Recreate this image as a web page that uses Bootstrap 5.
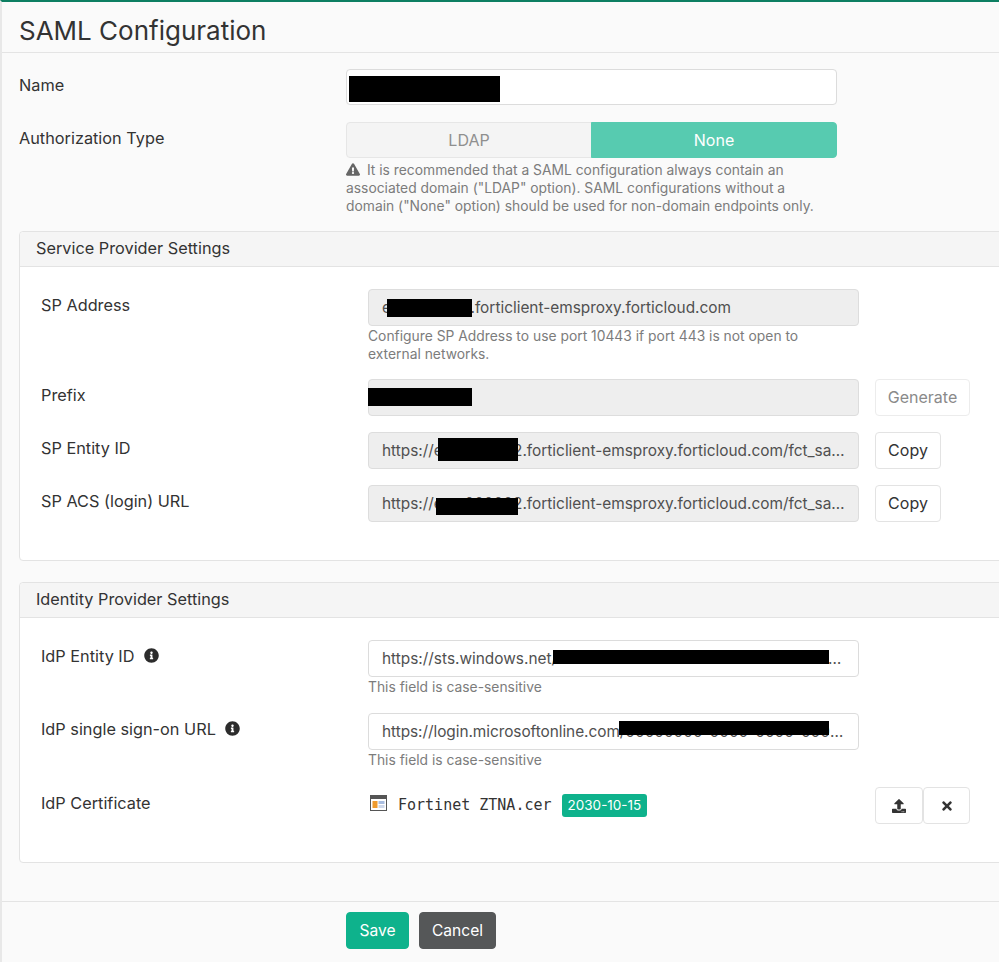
<!DOCTYPE html>
<html lang="en">
<head>
<meta charset="utf-8">
<title>SAML Configuration</title>
<link href="https://cdn.jsdelivr.net/npm/bootstrap@5.3.0/dist/css/bootstrap.min.css" rel="stylesheet">
<style>
html,body{height:962px;overflow:hidden;background:#fafafa}
body{font-family:Inter,"Liberation Sans",sans-serif;color:#333;font-size:16.3px}
.shell{height:962px;border-top:2px solid #0d7f62;border-left:2px solid #e8e8e8;background:#fafafa;overflow:hidden;display:flex;flex-direction:column}
.page-head{height:51px;border-bottom:1px solid #e4e4e4;padding-left:17px;display:flex;align-items:center}
.page-head h1{font-size:26px;font-weight:400;margin:0;color:#333;line-height:1;padding-top:8px}
.form-area{padding:16px 0 0 17px;flex:1 1 auto}
.fld{display:flex}
.fld-lbl{width:327px;flex:none;line-height:18px;padding-top:7px;color:#333}
.fld-main{width:491px;flex:none;position:relative}
.fld-side{margin-left:16px}
.ctl.form-control{height:37px;border:1px solid #dcdcdc;border-radius:4px;padding:0 13px 1px;font-size:15.4px;color:#505050;text-overflow:ellipsis;box-shadow:none}
.ctl.form-control[readonly]{background:#eee;border-color:#ddd}
.ctl-top{height:36px!important}
.ctl-tight.form-control{letter-spacing:-.05px}
.gap-a{margin-top:17px}
.seg .btn{height:36px;font-size:16px;border-radius:4px;padding:0;line-height:34px;flex:1 1 50%}
.seg-off{background:#f4f4f4;border:1px solid #e6e6e6;color:#8f8f8f}
.seg-on,.seg-on:hover{background:#57cbb0;border:1px solid #57cbb0;color:#fff}
.tip{font-size:13.85px;line-height:18px;color:#7c7c7c;margin:1px 0 0;width:470px}
.tip-top{margin-top:3px;width:480px}
.tip svg{width:14px;height:13px;fill:#666;vertical-align:-1px;margin-right:3px}
.pane{margin-right:-10px;border:1px solid #e3e3e3;border-radius:4px 0 0 4px;background:#fff}
.pane-one{margin-top:16px;height:330px}
.pane-two{margin-top:21px;height:281px}
.pane .card-header{height:35px;padding:0 16px;background:#f5f5f5;border-bottom:1px solid #e3e3e3;line-height:33px;color:#333;border-radius:4px 0 0 0}
.pane .card-body{padding:22px 0 0 21px}
.row-gap{margin-top:16px}
.row-gap-m{margin-top:17px}
.row-gap-l{margin-top:18px}
.ghost.btn{height:37px;padding:0;border:1px solid #e3e3e3;border-radius:4px;background:#fff;color:#333;font-size:16px;line-height:35px;white-space:nowrap;text-align:center}
.ghost-off.btn{color:#8a8a8a;border-color:#ececec;width:95px}
.ghost-copy.btn{width:66px}
.ghost-ico.btn{width:47px;padding:0;display:flex;align-items:center;justify-content:center}
.ghost-ico svg{height:14px;width:14px;fill:#333}
.ico-pair{margin-left:16px}
.ico-pair .ghost-ico.btn:first-child{width:48px}
.info{width:15px;height:15px;fill:#2c2c2c;margin-left:5px;vertical-align:-1px}
.cert{height:37px;display:flex;align-items:center;padding-bottom:1px}
.cert-ico{width:17px;height:16px;margin:0 0 4px 2px}
.cert-name{font-family:"DejaVu Sans Mono","Liberation Mono",monospace;font-size:15px;color:#333;margin-left:11px}
.cert-badge.badge{background:#0eb28c;color:#fff;font-weight:400;font-size:13.5px;line-height:23px;height:23px;padding:0 6px;border-radius:3px;margin-left:10px}
.redact{position:absolute;background:#000}
.foot{height:61px;border-top:1px solid #e4e4e4;padding:10px 0 0 344px;display:flex;gap:10px}
.foot .btn{height:37px;font-size:15.6px;border-radius:4px;padding:0;line-height:35px}
.save-btn,.save-btn:hover{background:#0eb28c;border:1px solid #0eb28c;color:#fff;width:63px}
.cancel-btn,.cancel-btn:hover{background:#555758;border:1px solid #555758;color:#fff;width:77px}
</style>
</head>
<body>
<div class="shell">
  <div class="page-head"><h1>SAML Configuration</h1></div>
  <div class="form-area">
    <div class="fld">
      <div class="fld-lbl">Name</div>
      <div class="fld-main">
        <input class="form-control ctl ctl-top" type="text" value="" aria-label="Name">
        <div class="redact" style="left:3px;top:7px;width:151px;height:26px"></div>
      </div>
    </div>
    <div class="fld gap-a">
      <div class="fld-lbl">Authorization Type</div>
      <div class="fld-main">
        <div class="btn-group w-100 seg" role="group">
          <button type="button" class="btn seg-off">LDAP</button>
          <button type="button" class="btn seg-on">None</button>
        </div>
        <p class="tip tip-top"><svg viewBox="0 0 576 512"><path d="M569.517 440.013C587.975 472.007 564.806 512 527.94 512H48.054c-36.937 0-59.999-40.055-41.577-71.987L246.423 23.985c18.467-32.009 64.72-31.951 83.154 0l239.94 416.028zM288 354c-25.405 0-46 20.595-46 46s20.595 46 46 46 46-20.595 46-46-20.595-46-46-46zm-43.673-165.346l7.418 136c.347 6.364 5.609 11.346 11.982 11.346h48.546c6.373 0 11.635-4.982 11.982-11.346l7.418-136c.375-6.874-5.098-12.654-11.982-12.654h-63.383c-6.884 0-12.356 5.78-11.981 12.654z"/></svg> It is recommended that a SAML configuration always contain an associated domain ("LDAP" option). SAML configurations without a domain ("None" option) should be used for non-domain endpoints only.</p>
      </div>
    </div>

    <div class="card pane pane-one">
      <div class="card-header">Service Provider Settings</div>
      <div class="card-body">
        <div class="fld">
          <div class="fld-lbl">SP Address</div>
          <div class="fld-main">
            <input class="form-control ctl" readonly value="ems000000.forticlient-emsproxy.forticloud.com" aria-label="SP Address">
            <div class="redact" style="left:19px;top:10px;width:85px;height:18px"></div>
            <p class="tip">Configure SP Address to use port 10443 if port 443 is not open to external networks.</p>
          </div>
        </div>
        <div class="fld row-gap">
          <div class="fld-lbl">Prefix</div>
          <div class="fld-main">
            <input class="form-control ctl" readonly value="" aria-label="Prefix">
            <div class="redact" style="left:0;top:9px;width:104px;height:18px"></div>
          </div>
          <div class="fld-side"><button type="button" class="btn ghost ghost-off">Generate</button></div>
        </div>
        <div class="fld row-gap">
          <div class="fld-lbl">SP Entity ID</div>
          <div class="fld-main">
            <input class="form-control ctl" readonly value="https://ems000002.forticlient-emsproxy.forticloud.com/fct_saml/login/metadata" aria-label="SP Entity ID">
            <div class="redact" style="left:70px;top:6px;width:80px;height:23px"></div>
          </div>
          <div class="fld-side"><button type="button" class="btn ghost ghost-copy">Copy</button></div>
        </div>
        <div class="fld row-gap">
          <div class="fld-lbl">SP ACS (login) URL</div>
          <div class="fld-main">
            <input class="form-control ctl" readonly value="https://ems000002.forticlient-emsproxy.forticloud.com/fct_saml/login/callback" aria-label="SP ACS (login) URL">
            <div class="redact" style="left:68px;top:13px;width:82px;height:17px"></div>
          </div>
          <div class="fld-side"><button type="button" class="btn ghost ghost-copy">Copy</button></div>
        </div>
      </div>
    </div>

    <div class="card pane pane-two">
      <div class="card-header">Identity Provider Settings</div>
      <div class="card-body">
        <div class="fld">
          <div class="fld-lbl">IdP Entity ID <svg class="info" viewBox="0 0 512 512"><path d="M256 8C119.043 8 8 119.083 8 256c0 136.997 111.043 248 248 248s248-111.003 248-248C504 119.083 392.957 8 256 8zm0 110c23.196 0 42 18.804 42 42s-18.804 42-42 42-42-18.804-42-42 18.804-42 42-42zm56 254c0 6.627-5.373 12-12 12h-88c-6.627 0-12-5.373-12-12v-24c0-6.627 5.373-12 12-12h12v-64h-12c-6.627 0-12-5.373-12-12v-24c0-6.627 5.373-12 12-12h64c6.627 0 12 5.373 12 12v100h12c6.627 0 12 5.373 12 12v24z"/></svg></div>
          <div class="fld-main">
            <input class="form-control ctl" value="https://sts.windows.net/00000000-0000-0000-0000-000000000000000000000000/" aria-label="IdP Entity ID">
            <div class="redact" style="left:185px;top:10px;width:276px;height:14px"></div>
            <p class="tip">This field is case-sensitive</p>
          </div>
        </div>
        <div class="fld row-gap-m">
          <div class="fld-lbl">IdP single sign-on URL <svg class="info" viewBox="0 0 512 512"><path d="M256 8C119.043 8 8 119.083 8 256c0 136.997 111.043 248 248 248s248-111.003 248-248C504 119.083 392.957 8 256 8zm0 110c23.196 0 42 18.804 42 42s-18.804 42-42 42-42-18.804-42-42 18.804-42 42-42zm56 254c0 6.627-5.373 12-12 12h-88c-6.627 0-12-5.373-12-12v-24c0-6.627 5.373-12 12-12h12v-64h-12c-6.627 0-12-5.373-12-12v-24c0-6.627 5.373-12 12-12h64c6.627 0 12 5.373 12 12v100h12c6.627 0 12 5.373 12 12v24z"/></svg></div>
          <div class="fld-main">
            <input class="form-control ctl ctl-tight" value="https://login.microsoftonline.com/00000000-0000-0000-0000-000000000000/saml2" aria-label="IdP single sign-on URL">
            <div class="redact" style="left:251px;top:8px;width:210px;height:14px"></div>
            <p class="tip">This field is case-sensitive</p>
          </div>
        </div>
        <div class="fld row-gap-l">
          <div class="fld-lbl">IdP Certificate</div>
          <div class="fld-main cert">
            <svg class="cert-ico" viewBox="0 0 17 16"><rect x=".5" y=".5" width="16" height="15" fill="#fff" stroke="#555"/><rect x="1" y="1" width="15" height="3" fill="#555"/><rect x="2.500" y="6" width="5" height="7" fill="#ee9a2e"/><rect x="8.500" y="6" width="6" height="3" fill="#a9bde0"/><rect x="8.500" y="10" width="6" height="3" fill="#cfd8ea"/></svg>
            <span class="cert-name">Fortinet ZTNA.cer</span>
            <span class="badge cert-badge">2030-10-15</span>
          </div>
          <div class="d-flex ico-pair">
            <button type="button" class="btn ghost ghost-ico" aria-label="Upload"><svg viewBox="0 0 512 512"><path d="M296 384h-80c-13.3 0-24-10.7-24-24V192h-87.700c-17.800 0-26.700-21.500-14.100-34.100L242.300 5.700c7.500-7.500 19.800-7.500 27.300 0l152.200 152.200c12.600 12.600 3.700 34.100-14.100 34.100H320v168c0 13.300-10.700 24-24 24zm216-8v112c0 13.300-10.700 24-24 24H24c-13.300 0-24-10.700-24-24V376c0-13.300 10.700-24 24-24h136v8c0 30.900 25.100 56 56 56h80c30.900 0 56-25.100 56-56v-8h136c13.300 0 24 10.700 24 24zm-124 88c0-11-9-20-20-20s-20 9-20 20 9 20 20 20 20-9 20-20zm64 0c0-11-9-20-20-20s-20 9-20 20 9 20 20 20 20-9 20-20z"/></svg></button>
            <button type="button" class="btn ghost ghost-ico" aria-label="Remove"><svg viewBox="0 0 352 512"><path d="M242.720 256l100.070-100.070c12.280-12.280 12.280-32.190 0-44.480l-22.240-22.240c-12.280-12.280-32.190-12.280-44.480 0L176 189.280 75.930 89.210c-12.280-12.280-32.190-12.280-44.480 0L9.210 111.450c-12.280 12.280-12.280 32.190 0 44.480L109.280 256 9.210 356.070c-12.280 12.280-12.280 32.190 0 44.480l22.240 22.240c12.280 12.280 32.200 12.280 44.480 0L176 322.720l100.070 100.070c12.280 12.280 32.200 12.280 44.480 0l22.240-22.240c12.280-12.280 12.280-32.190 0-44.480L242.720 256z"/></svg></button>
          </div>
        </div>
      </div>
    </div>
  </div>
  <div class="foot">
    <button type="button" class="btn save-btn">Save</button>
    <button type="button" class="btn cancel-btn">Cancel</button>
  </div>
</div>
<script src="https://cdn.jsdelivr.net/npm/bootstrap@5.3.0/dist/js/bootstrap.bundle.min.js"></script>
</body>
</html>
